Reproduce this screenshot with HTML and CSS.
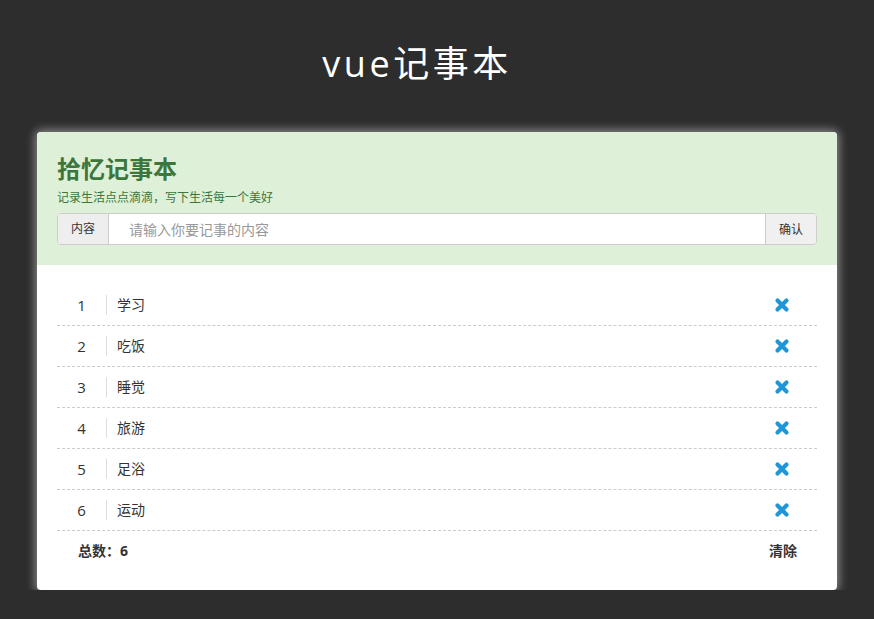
FILE: index.html
```html
<!DOCTYPE html>
<html>
<head>
  <meta charset="utf-8">
  <title>vue记事本</title>
  <link rel="stylesheet" href="styles.css">
</head>
<body>
  <h1 class="page-title">vue记事本</h1>

  <div class="notebook">
    <div class="notebook-header">
      <h2>拾忆记事本</h2>
      <p class="subtitle">记录生活点点滴滴，写下生活每一个美好</p>
      <div class="input-group">
        <span class="addon">内容</span>
        <input type="text" class="note-input" placeholder="请输入你要记事的内容">
        <button class="confirm-button">确认</button>
      </div>
    </div>

    <div class="notebook-body">
      <ul class="note-list">
        <li class="note-row">
          <span class="note-index">1</span>
          <span class="note-text">学习</span>
          <span class="note-remove"><svg viewBox="0 0 16 16"><path d="M3.5 3.5L12.5 12.5M12.5 3.5L3.5 12.5"/></svg></span>
        </li>
        <li class="note-row">
          <span class="note-index">2</span>
          <span class="note-text">吃饭</span>
          <span class="note-remove"><svg viewBox="0 0 16 16"><path d="M3.5 3.5L12.5 12.5M12.5 3.5L3.5 12.5"/></svg></span>
        </li>
        <li class="note-row">
          <span class="note-index">3</span>
          <span class="note-text">睡觉</span>
          <span class="note-remove"><svg viewBox="0 0 16 16"><path d="M3.5 3.5L12.5 12.5M12.5 3.5L3.5 12.5"/></svg></span>
        </li>
        <li class="note-row">
          <span class="note-index">4</span>
          <span class="note-text">旅游</span>
          <span class="note-remove"><svg viewBox="0 0 16 16"><path d="M3.5 3.5L12.5 12.5M12.5 3.5L3.5 12.5"/></svg></span>
        </li>
        <li class="note-row">
          <span class="note-index">5</span>
          <span class="note-text">足浴</span>
          <span class="note-remove"><svg viewBox="0 0 16 16"><path d="M3.5 3.5L12.5 12.5M12.5 3.5L3.5 12.5"/></svg></span>
        </li>
        <li class="note-row">
          <span class="note-index">6</span>
          <span class="note-text">运动</span>
          <span class="note-remove"><svg viewBox="0 0 16 16"><path d="M3.5 3.5L12.5 12.5M12.5 3.5L3.5 12.5"/></svg></span>
        </li>
      </ul>
      <div class="note-footer">
        <span>总数：6</span>
        <span>清除</span>
      </div>
    </div>
  </div>
</body>
</html>
```

FILE: styles.css
```css
body {
  margin: 0;
  background-color: #2d2d2d;
  font-family: "Open Sans", "Noto Sans CJK SC", sans-serif;
  color: #333;
}

.page-title {
  margin: 0;
  padding: 42px 40px 0 0;
  height: 90px;
  box-sizing: border-box;
  text-align: center;
  font-size: 36px;
  line-height: 44px;
  font-weight: normal;
  letter-spacing: 3.5px;
  color: #fff;
}

/* the card */
.notebook {
  width: 800px;
  margin: 42px auto 0;
  background-color: #fff;
  border-radius: 4px;
  box-shadow: 0 0 10px 2px rgba(255, 255, 255, 0.45);
}

.notebook-header {
  background-color: #dff0d8;
  border-radius: 4px 4px 0 0;
  padding: 22px 20px 20px;
  color: #3c763d;
}

.notebook-header h2 {
  margin: 0;
  font-size: 24px;
  line-height: 30px;
  font-weight: bold;
}

.subtitle {
  margin: 5px 0 0;
  font-size: 12px;
  line-height: 18px;
}

.input-group {
  display: flex;
  margin-top: 6px;
  height: 32px;
  border: 1px solid #ccc;
  border-radius: 4px;
  box-sizing: border-box;
  overflow: hidden;
  background-color: #fff;
}

.addon {
  width: 50px;
  border-right: 1px solid #ccc;
  background-color: #eee;
  font-size: 12px;
  line-height: 30px;
  text-align: center;
  color: #333;
}

.note-input {
  flex: 1;
  border: none;
  outline: none;
  padding: 0 20px;
  font-family: inherit;
  font-size: 14px;
  color: #555;
}

.note-input::placeholder {
  color: #999;
}

.confirm-button {
  width: 51px;
  border: none;
  border-left: 1px solid #ccc;
  background-color: #f0f0f0;
  font-family: inherit;
  font-size: 12px;
  color: #333;
  padding: 0;
}

/* the list */
.notebook-body {
  padding: 20px 20px 19px;
}

.note-list {
  list-style: none;
  margin: 0;
  padding: 0;
}

.note-row {
  display: flex;
  align-items: center;
  height: 40px;
  border-bottom: 1px dashed #ccc;
  font-size: 14px;
}

.note-index {
  width: 50px;
  box-sizing: border-box;
  text-align: center;
  font-size: 15px;
  line-height: 20px;
  border-right: 1px solid #ddd;
}

.note-text {
  flex: 1;
  padding-left: 10px;
  line-height: 20px;
}

.note-remove {
  width: 70px;
  display: flex;
  justify-content: center;
}

.note-remove svg {
  width: 16px;
  height: 16px;
  stroke: #1e96d8;
  stroke-width: 4.2;
  stroke-linecap: round;
  fill: none;
}

.note-footer {
  display: flex;
  justify-content: space-between;
  padding: 0 20px 0 21px;
  height: 40px;
  line-height: 40px;
  font-size: 14px;
  font-weight: bold;
}
```
